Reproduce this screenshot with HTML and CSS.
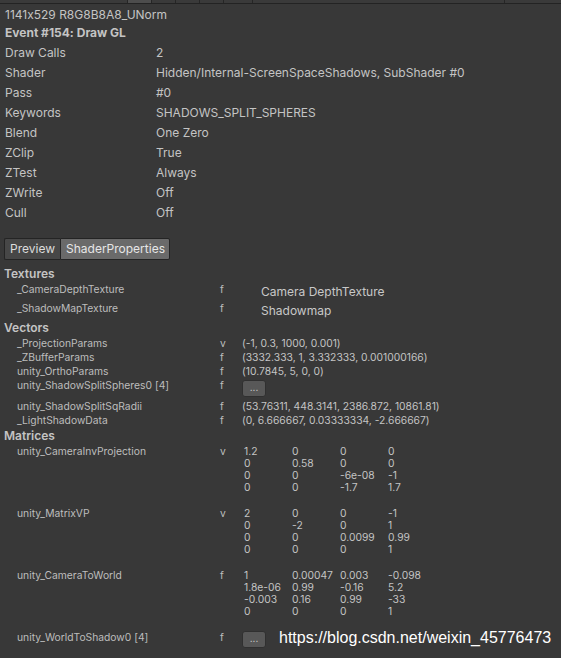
FILE: index.html
```html
<!DOCTYPE html>
<html>
<head>
<meta charset="utf-8">
<link rel="stylesheet" href="styles.css">
</head>
<body>
<div class="tabstrip">
  <div class="tab w127"></div>
  <div class="tab w24 active"></div>
  <div class="tab w24"></div>
  <div class="tab w24"></div>
  <div class="tab w24"></div>
  <div class="tab w29"></div>
  <div class="tab w252"></div>
  <div class="tab rest"></div>
</div>

<div class="info">
  <div class="line">1141x529 R8G8B8A8_UNorm</div>
  <div class="line bold">Event #154: Draw GL</div>
  <div class="kv">
    <div>Draw Calls</div><div>2</div>
    <div>Shader</div><div>Hidden/Internal-ScreenSpaceShadows, SubShader #0</div>
    <div>Pass</div><div>#0</div>
    <div>Keywords</div><div>SHADOWS_SPLIT_SPHERES</div>
    <div>Blend</div><div>One Zero</div>
    <div>ZClip</div><div>True</div>
    <div>ZTest</div><div>Always</div>
    <div>ZWrite</div><div>Off</div>
    <div>Cull</div><div>Off</div>
  </div>
</div>

<div class="toolbar">
  <div class="tbtn">Preview</div>
  <div class="tbtn on">ShaderProperties</div>
</div>

<div class="props">
  <div class="hdr">Textures</div>
  <div class="prow tex"><span class="nm">_CameraDepthTexture</span><span class="ty">f</span><span class="val">Camera DepthTexture</span></div>
  <div class="prow tex"><span class="nm">_ShadowMapTexture</span><span class="ty">f</span><span class="val">Shadowmap</span></div>

  <div class="hdr">Vectors</div>
  <div class="prow vec"><span class="nm">_ProjectionParams</span><span class="ty">v</span><span class="val">(-1, 0.3, 1000, 0.001)</span></div>
  <div class="prow vec"><span class="nm">_ZBufferParams</span><span class="ty">f</span><span class="val">(3332.333, 1, 3.332333, 0.001000166)</span></div>
  <div class="prow vec"><span class="nm">unity_OrthoParams</span><span class="ty">f</span><span class="val">(10.7845, 5, 0, 0)</span></div>
  <div class="prow vec btnrow"><span class="nm">unity_ShadowSplitSpheres0 [4]</span><span class="ty">f</span><span class="val"><span class="dots">...</span></span></div>
  <div class="prow vec"><span class="nm">unity_ShadowSplitSqRadii</span><span class="ty">f</span><span class="val">(53.76311, 448.3141, 2386.872, 10861.81)</span></div>
  <div class="prow vec"><span class="nm">_LightShadowData</span><span class="ty">f</span><span class="val">(0, 6.666667, 0.03333334, -2.666667)</span></div>

  <div class="hdr mhdr">Matrices</div>
  <div class="prow mat"><span class="nm">unity_CameraInvProjection</span><span class="ty">v</span>
    <div class="grid4">
      <span>1.2</span><span>0</span><span>0</span><span>0</span>
      <span>0</span><span>0.58</span><span>0</span><span>0</span>
      <span>0</span><span>0</span><span>-6e-08</span><span>-1</span>
      <span>0</span><span>0</span><span>-1.7</span><span>1.7</span>
    </div>
  </div>
  <div class="prow mat"><span class="nm">unity_MatrixVP</span><span class="ty">v</span>
    <div class="grid4">
      <span>2</span><span>0</span><span>0</span><span>-1</span>
      <span>0</span><span>-2</span><span>0</span><span>1</span>
      <span>0</span><span>0</span><span>0.0099</span><span>0.99</span>
      <span>0</span><span>0</span><span>0</span><span>1</span>
    </div>
  </div>
  <div class="prow mat"><span class="nm">unity_CameraToWorld</span><span class="ty">f</span>
    <div class="grid4">
      <span>1</span><span>0.00047</span><span>0.003</span><span>-0.098</span>
      <span>1.8e-06</span><span>0.99</span><span>-0.16</span><span>5.2</span>
      <span>-0.003</span><span>0.16</span><span>0.99</span><span>-33</span>
      <span>0</span><span>0</span><span>0</span><span>1</span>
    </div>
  </div>
  <div class="prow mat last"><span class="nm">unity_WorldToShadow0 [4]</span><span class="ty">f</span><span class="val"><span class="dots">...</span></span></div>
</div>

<div class="watermark">https://blog.csdn.net/weixin_45776473</div>
</body>
</html>
```

FILE: styles.css
```css
html, body {
  margin: 0;
  padding: 0;
  background: #383838;
}
body {
  width: 561px;
  height: 658px;
  overflow: hidden;
  position: relative;
  font-family: Inter, "Noto Sans", "DejaVu Sans", sans-serif;
  font-feature-settings: "calt" 0;
  color: #c4c4c4;
  font-size: 12px;
}

/* top tab strip */
.tabstrip {
  display: flex;
  height: 3px;
  border-bottom: 1px solid #232323;
  background: #3a3a3a;
}
.tab {
  box-sizing: border-box;
  height: 3px;
  border-right: 1px solid #262626;
}
.tab.active { background: #4d4d4d; }
.w127 { width: 128px; }
.w24 { width: 24px; }
.w29 { width: 29px; }
.w252 { width: 252px; }
.rest { flex: 1; border-right: none; }

/* info section */
.info {
  padding: 2px 0 0 5px;
}
.line {
  line-height: 18px;
  height: 18px;
}
.bold { font-weight: 700; }
.kv {
  display: grid;
  grid-template-columns: 151px 1fr;
  grid-auto-rows: 20px;
  align-items: center;
}

/* toolbar */
.toolbar {
  display: flex;
  margin: 16px 0 0 4px;
  height: 22px;
}
.tbtn {
  box-sizing: border-box;
  height: 22px;
  line-height: 20px;
  border: 1px solid #242424;
  background: #474747;
  color: #dcdcdc;
  padding: 0 5px;
  font-size: 12px;
}
.tbtn:first-child {
  width: 56px;
  border-radius: 2px 0 0 2px;
  border-right: none;
}
.tbtn.on {
  width: 110px;
  background: #6a6a6a;
  color: #e6e6e6;
  border-radius: 0 2px 2px 0;
}

/* shader properties */
.props {
  padding-top: 6px;
}
.hdr {
  padding-left: 4px;
  font-weight: 600;
  font-size: 12px;
  line-height: 16px;
  height: 16px;
}
.mhdr {
  line-height: 18px;
  height: 16px;
}
.prow {
  display: grid;
  grid-template-columns: 203px 22px 1fr;
  padding-left: 17px;
  font-size: 10.3px;
  color: #bdbdbd;
}
.tex {
  height: 19px;
  line-height: 15px;
}
.tex .val {
  padding-left: 19px;
  font-size: 12px;
  line-height: 19px;
  color: #c8c8c8;
}
.vec {
  height: 14px;
  line-height: 14px;
}
.vec .val { color: #c4c4c4; }
.btnrow {
  height: 21px;
}
.dots {
  display: inline-block;
  box-sizing: border-box;
  width: 24px;
  height: 17px;
  margin-top: 2px;
  border: 1px solid #303030;
  border-radius: 3px;
  background: #585858;
  color: #d0d0d0;
  font-size: 10px;
  line-height: 13px;
  text-align: center;
  vertical-align: top;
}
.mat {
  height: 62px;
  box-sizing: border-box;
  padding-top: 2px;
  line-height: 12px;
}
.mat .ty, .mat .nm { line-height: 12px; }
.grid4 {
  display: grid;
  grid-template-columns: repeat(4, 48px);
  grid-auto-rows: 12px;
  padding-left: 2px;
  color: #c4c4c4;
}
.mat.last {
  height: 20px;
}
.mat.last .dots { margin-top: 0; }

.watermark {
  position: absolute;
  left: 279px;
  top: 627px;
  font-family: "Liberation Sans", Arial, sans-serif;
  font-size: 16px;
  line-height: 22px;
  color: #ffffff;
  white-space: nowrap;
}
```
